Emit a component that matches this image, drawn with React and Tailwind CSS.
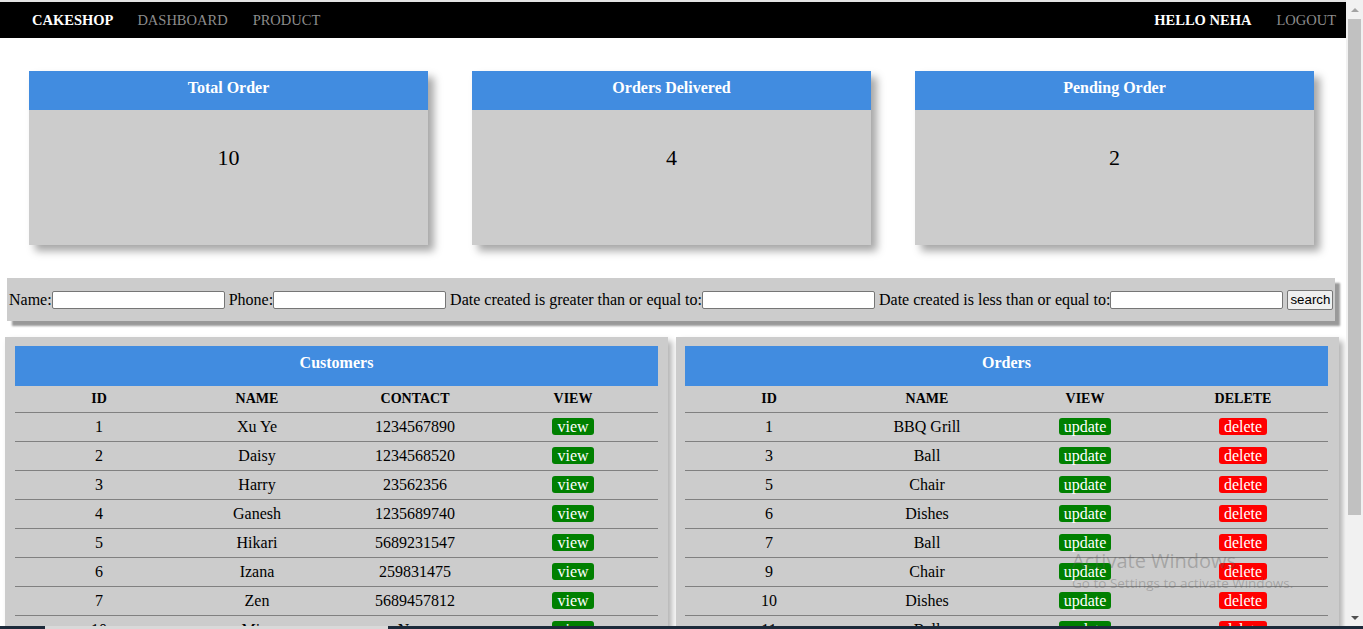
const customers = [
  { id: 1, name: "Xu Ye", contact: "1234567890" },
  { id: 2, name: "Daisy", contact: "1234568520" },
  { id: 3, name: "Harry", contact: "23562356" },
  { id: 4, name: "Ganesh", contact: "1235689740" },
  { id: 5, name: "Hikari", contact: "5689231547" },
  { id: 6, name: "Izana", contact: "259831475" },
  { id: 7, name: "Zen", contact: "5689457812" },
  { id: 10, name: "Mira", contact: "None" },
];

const orders = [
  { id: 1, name: "BBQ Grill" },
  { id: 3, name: "Ball" },
  { id: 5, name: "Chair" },
  { id: 6, name: "Dishes" },
  { id: 7, name: "Ball" },
  { id: 9, name: "Chair" },
  { id: 10, name: "Dishes" },
  { id: 11, name: "Ball" },
];

const stats = [
  { title: "Total Order", value: 10 },
  { title: "Orders Delivered", value: 4 },
  { title: "Pending Order", value: 2 },
];

function Badge({ children, red }) {
  return (
    <span
      className={`inline-block rounded-[3px] px-[5px] text-[16px] leading-[17px] text-white ${
        red ? "bg-[#ff0000]" : "bg-[#008000]"
      }`}
    >
      {children}
    </span>
  );
}

function Row({ cells }) {
  return (
    <tr className="h-[29px] border-b border-[#808080]">
      <td className="pl-[5px]">{cells[0]}</td>
      <td>{cells[1]}</td>
      <td>{cells[2]}</td>
      <td className="pr-[6px]">{cells[3]}</td>
    </tr>
  );
}

function Panel({ title, heads, children, pad }) {
  return (
    <div
      className={`w-[663px] shrink-0 bg-[#cccccc] ${pad} pt-[9px] shadow-[4px_4px_6px_rgba(0,0,0,0.3)]`}
    >
      <div className="flex h-[40px] justify-center bg-[#418ce0] pt-[5px] text-[16px] font-bold text-white">
        {title}
      </div>
      <table className="w-full table-fixed border-collapse text-center text-[16px]">
        <colgroup>
          <col className="w-[163px]" />
          <col className="w-[158px]" />
          <col className="w-[158px]" />
          <col />
        </colgroup>
        <thead>
          <tr className="h-[26px] border-b border-[#808080] text-[14px] font-bold">
            <th className="pl-[5px]">{heads[0]}</th>
            <th>{heads[1]}</th>
            <th>{heads[2]}</th>
            <th className="pr-[6px]">{heads[3]}</th>
          </tr>
        </thead>
        <tbody>{children}</tbody>
      </table>
    </div>
  );
}

export default function App() {
  return (
    <div
      className="relative flex h-screen w-full flex-col overflow-hidden bg-white text-black"
      style={{ fontFamily: '"Liberation Serif", "Times New Roman", serif' }}
    >
      <div className="flex min-h-0 flex-1">
        {/* page */}
        <div className="flex min-w-0 flex-1 flex-col overflow-hidden">
          <div className="h-[2px] shrink-0 bg-[#e3e3e3]" />
          <nav className="flex h-[36px] shrink-0 items-center bg-black pl-[32px] pr-[10px] pt-[1px] text-[14.5px]">
            <span className="font-bold text-white">CAKESHOP</span>
            <span className="ml-[24px] text-[#8c8c8c]">DASHBOARD</span>
            <span className="ml-[25px] text-[#8c8c8c]">PRODUCT</span>
            <span className="ml-auto font-bold text-white">HELLO NEHA</span>
            <span className="ml-[25px] text-[#8c8c8c]">LOGOUT</span>
          </nav>

          {/* stat cards */}
          <div className="mt-[33px] flex shrink-0 gap-[44px] pl-[29px]">
            {stats.map((s) => (
              <div
                key={s.title}
                className="w-[399px] shadow-[6px_6px_8px_rgba(0,0,0,0.35)]"
              >
                <div className="flex h-[39px] justify-center bg-[#418ce0] pt-[5px] text-[16px] font-bold text-white">
                  {s.title}
                </div>
                <div className="flex h-[135px] justify-center bg-[#cccccc] pt-[31px] text-[22px]">
                  {s.value}
                </div>
              </div>
            ))}
          </div>

          {/* filter */}
          <div className="ml-[7px] mt-[33px] flex h-[43px] w-[1328px] shrink-0 items-center bg-[#cccccc] pl-[2px] text-[16px] shadow-[5px_5px_2px_#999999]">
            <span>Name:</span>
            <input className="h-[18px] w-[173px] rounded-[2px] border border-[#767676] bg-white" />
            <span className="ml-[4px]">Phone:</span>
            <input className="h-[18px] w-[173px] rounded-[2px] border border-[#767676] bg-white" />
            <span className="ml-[4px]">Date created is greater than or equal to:</span>
            <input className="h-[18px] w-[173px] rounded-[2px] border border-[#767676] bg-white" />
            <span className="ml-[4px]">Date created is less than or equal to:</span>
            <input className="h-[18px] w-[173px] rounded-[2px] border border-[#767676] bg-white" />
            <button
              className="ml-[4px] h-[20px] rounded-[2px] border border-[#767676] bg-[#efefef] px-[2px] text-[13.3px] leading-none"
              style={{ fontFamily: '"Liberation Sans", Arial, sans-serif' }}
            >
              search
            </button>
          </div>

          {/* tables */}
          <div className="mt-[16px] flex gap-[8px] pl-[5px]">
            <Panel
              title="Customers"
              heads={["ID", "NAME", "CONTACT", "VIEW"]}
              pad="px-[10px]"
            >
              {customers.map((c) => (
                <Row key={c.id} cells={[c.id, c.name, c.contact, <Badge>view</Badge>]} />
              ))}
            </Panel>
            <Panel
              title="Orders"
              heads={["ID", "NAME", "VIEW", "DELETE"]}
              pad="pl-[9px] pr-[11px]"
            >
              {orders.map((o) => (
                <Row
                  key={o.id}
                  cells={[o.id, o.name, <Badge>update</Badge>, <Badge red>delete</Badge>]}
                />
              ))}
            </Panel>
          </div>
        </div>

        {/* browser scrollbar */}
        <div className="flex w-[17px] shrink-0 flex-col items-center bg-[#f1f1f1]">
          <div className="flex h-[19px] items-center justify-center">
            <div className="h-0 w-0 border-x-[4px] border-b-[4px] border-x-transparent border-b-[#a3a3a3]" />
          </div>
          <div className="h-[496px] w-[13px] bg-[#c1c1c1]" />
          <div className="flex-1" />
          <div className="flex h-[17px] items-center justify-center">
            <div className="h-0 w-0 border-x-[4px] border-t-[4px] border-x-transparent border-t-[#505050]" />
          </div>
        </div>
      </div>

      {/* bottom strip */}
      <div className="flex h-[3px] shrink-0 bg-[#1c2a3a]">
        <div className="ml-[45px] w-[343px] bg-[#d9d9d9]" />
      </div>

      {/* OS watermark */}
      <div
        className="pointer-events-none absolute left-[1072px] top-[548px] text-[rgba(90,90,90,0.35)]"
        style={{ fontFamily: '"Open Sans", "Noto Sans", sans-serif' }}
      >
        <div className="text-[20px] leading-[26px]">Activate Windows</div>
        <div className="text-[13.5px] leading-[18px]">
          Go to Settings to activate Windows.
        </div>
      </div>
    </div>
  );
}
